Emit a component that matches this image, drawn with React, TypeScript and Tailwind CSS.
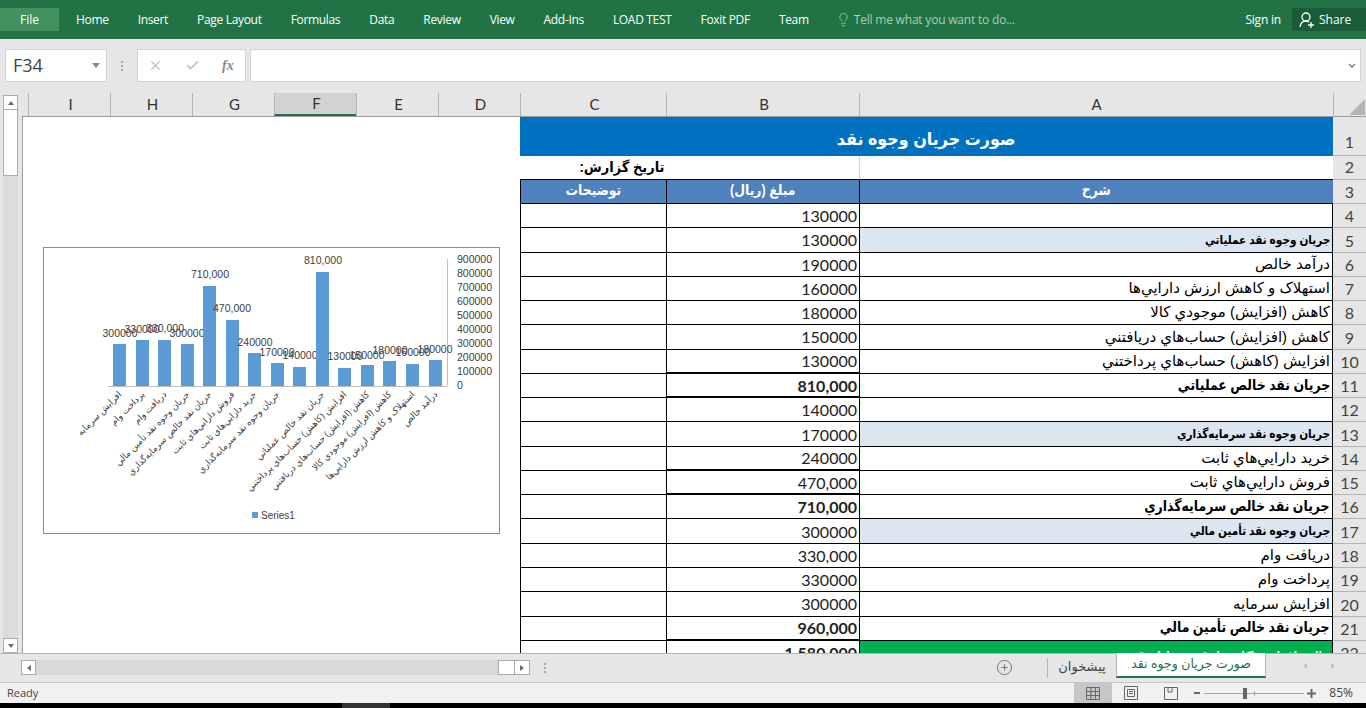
import React from 'react';
import { Check, CirclePlus, Lightbulb, X } from 'lucide-react';

interface SheetRow {
  n: number;
  value: string;
  label: string;
  kind?: 'section' | 'total' | 'result';
  thick?: boolean;
}

const ribbonTabs = ['Home', 'Insert', 'Page Layout', 'Formulas', 'Data', 'Review', 'View', 'Add-Ins', 'LOAD TEST', 'Foxit PDF', 'Team'];
const columnHeads = ['I', 'H', 'G', 'F', 'E', 'D'];

const rows: SheetRow[] = [
  { n: 4, value: '130000', label: '' },
  { n: 5, value: '130000', label: 'جريان وجوه نقد عملياتي', kind: 'section' },
  { n: 6, value: '190000', label: 'درآمد خالص' },
  { n: 7, value: '160000', label: 'استهلاک و کاهش ارزش دارايي‌ها' },
  { n: 8, value: '180000', label: 'کاهش (افزايش) موجودي کالا' },
  { n: 9, value: '150000', label: 'کاهش (افزايش) حساب‌هاي دريافتني' },
  { n: 10, value: '130000', label: 'افزايش (کاهش) حساب‌هاي پرداختني', thick: true },
  { n: 11, value: '810,000', label: 'جريان نقد خالص عملياتي', kind: 'total', thick: true },
  { n: 12, value: '140000', label: '' },
  { n: 13, value: '170000', label: 'جريان وجوه نقد سرمايه‌گذاري', kind: 'section' },
  { n: 14, value: '240000', label: 'خريد دارايي‌هاي ثابت', thick: true },
  { n: 15, value: '470,000', label: 'فروش دارايي‌هاي ثابت', thick: true },
  { n: 16, value: '710,000', label: 'جريان نقد خالص سرمايه‌گذاري', kind: 'total' },
  { n: 17, value: '300000', label: 'جريان وجوه نقد تأمين مالي', kind: 'section' },
  { n: 18, value: '330,000', label: 'دريافت وام' },
  { n: 19, value: '330000', label: 'پرداخت وام' },
  { n: 20, value: '300000', label: 'افزايش سرمايه' },
  { n: 21, value: '960,000', label: 'جريان نقد خالص تأمين مالي', kind: 'total', thick: true },
  { n: 22, value: '1,580,000', label: 'خالص افزايش (کاهش) نقدي معادل نقد', kind: 'result' },
];

const chartBars = [
  { x: 70, top: 97, label: '300000', lx: 77, ly: 86, cat: 'افزايش سرمايه' },
  { x: 93, top: 93, label: '330000', lx: 99, ly: 82, cat: 'پرداخت وام' },
  { x: 115, top: 93, label: '330,000', lx: 122, ly: 81, cat: 'دريافت وام' },
  { x: 138, top: 97, label: '300000', lx: 144, ly: 86, cat: 'جريان وجوه نقد تأمين مالي' },
  { x: 160, top: 39, label: '710,000', lx: 167, ly: 27, cat: 'جريان نقد خالص سرمايه‌گذاري' },
  { x: 183, top: 73, label: '470,000', lx: 189, ly: 61, cat: 'فروش دارايي‌هاي ثابت' },
  { x: 205, top: 106, label: '240000', lx: 212, ly: 95, cat: 'خريد دارايي‌هاي ثابت' },
  { x: 228, top: 116, label: '170000', lx: 234, ly: 105, cat: 'جريان وجوه نقد سرمايه‌گذاري' },
  { x: 250, top: 120, label: '140000', lx: 257, ly: 108, cat: '' },
  { x: 273, top: 25, label: '810,000', lx: 280, ly: 13, cat: 'جريان نقد خالص عملياتي' },
  { x: 295, top: 121, label: '130000', lx: 302, ly: 109, cat: 'افزايش (کاهش) حساب‌هاي پرداختني' },
  { x: 318, top: 118, label: '150000', lx: 324, ly: 108, cat: 'کاهش (افزايش) حساب‌هاي دريافتني' },
  { x: 340, top: 114, label: '180000', lx: 347, ly: 103, cat: 'کاهش (افزايش) موجودي کالا' },
  { x: 363, top: 117, label: '160000', lx: 370, ly: 105, cat: 'استهلاک و کاهش ارزش دارايي‌ها' },
  { x: 386, top: 113, label: '180000', lx: 392, ly: 102, cat: 'درآمد خالص' },
];

const axisTicks = [900000, 800000, 700000, 600000, 500000, 400000, 300000, 200000, 100000, 0];

const CashFlowChart = () => (
  <svg width="457" height="287" viewBox="0 0 457 287" className="block">
    <rect x="0.5" y="0.5" width="456" height="286" fill="#fff" stroke="#8c8c8c" />
    <line x1="65" y1="139.5" x2="404" y2="139.5" stroke="#bfbfbf" />
    <line x1="404.5" y1="12" x2="404.5" y2="139" stroke="#bfbfbf" />
    {axisTicks.map((tick, i) => (
      <text key={tick} x="414" y={15.5 + i * 14.05} fontSize="10.5" fill="#404040" fontFamily="'Liberation Sans', sans-serif">
        {tick}
      </text>
    ))}
    {chartBars.map((bar) => (
      <g key={bar.x}>
        <rect x={bar.x} y={bar.top} width="13" height={139 - bar.top} fill="#5b9bd5" />
        <text x={bar.lx} y={bar.ly + 3.5} fontSize="10.5" fill="#404040" textAnchor="middle" fontFamily="'Liberation Sans', sans-serif">
          {bar.label}
        </text>
        {bar.cat && (
          <text
            x={bar.x + 9}
            y={148}
            fontSize="9"
            fill="#404040"
            textAnchor="end"
            transform={`rotate(-45 ${bar.x + 9} 148)`}
            fontFamily="'Liberation Sans', 'DejaVu Sans', sans-serif"
          >
            {bar.cat}
          </text>
        )}
      </g>
    ))}
    <rect x="209" y="265" width="6" height="6" fill="#5b9bd5" />
    <text x="218" y="272" fontSize="10" fill="#404040" fontFamily="'Liberation Sans', sans-serif">
      Series1
    </text>
  </svg>
);

const RowNumber = ({ n }: { n: number }) => (
  <div
    className={`flex items-end justify-center bg-[#e6e6e6] border-b border-[#b5b5b5] text-[#444] text-[16px] leading-[20px] font-['Lato',sans-serif] ${n === 1 ? 'pb-[3px]' : n === 2 ? 'pb-[2px]' : 'pb-[1px]'}`}
  >
    {n}
  </div>
);

const SheetGrid = () => (
  <div className="w-[846px] h-[536px] overflow-hidden grid grid-cols-[146px_193px_474px_33px] grid-rows-[39px_24px_24px_repeat(18,24.28px)_24px] text-black font-['Liberation_Sans','DejaVu_Sans',sans-serif]">
    <div className="col-span-3 bg-[#0070c0] flex items-center justify-center text-white font-bold text-[17px]" dir="rtl">
      <span className="pt-[7px] scale-x-[0.94]">صورت جریان وجوه نقد</span>
    </div>
    <RowNumber n={1} />

    <div className="border-b border-black flex items-center justify-end pr-[2px] font-bold text-[14px]">
      <span dir="rtl" className="origin-right scale-x-[0.93]">تاریخ گزارش:</span>
    </div>
    <div className="border-b border-black" />
    <div className="border-b border-black border-l border-l-[#d4d4d4]" />
    <RowNumber n={2} />

    {['توضیحات', 'مبلغ (ریال)', 'شرح'].map((head) => (
      <div key={head} className="bg-[#4f81bd] border-b border-l border-black flex items-center justify-center text-white font-bold text-[14px]">
        <span dir="rtl" className="pb-[2px] scale-x-[0.89]">{head}</span>
      </div>
    ))}
    <RowNumber n={3} />

    {rows.map((row) => {
      const bold = row.kind === 'total' || row.kind === 'result';
      let labelClass = 'bg-white text-black text-[15px]';
      let spanClass = '';
      if (row.kind === 'section') {
        labelClass = 'bg-[#dce6f1] text-black font-bold text-[12px]';
        spanClass = 'origin-right scale-x-[0.875]';
      }
      if (row.kind === 'total') {
        labelClass = 'bg-white text-black font-bold text-[14.5px]';
        spanClass = 'origin-right scale-x-[0.86]';
      }
      if (row.kind === 'result') {
        labelClass = 'bg-[#00b050] text-white font-bold text-[12px] pt-[8px]';
        spanClass = 'origin-right scale-x-[0.875]';
      }
      return (
        <React.Fragment key={row.n}>
          <div className="border-b border-l border-black" />
          <div
            className={`${row.thick ? 'border-b-2' : 'border-b'} border-l border-black flex items-center justify-end pr-[2px] pt-[1px] text-[16px] font-['Lato',sans-serif] text-[#222] ${bold ? 'font-bold' : ''}`}
          >
            {row.value}
          </div>
          <div className={`${labelClass} border-b border-l border-r border-black flex items-center justify-end pr-[2px]`}>
            <span dir="rtl" className={spanClass}>{row.label}</span>
          </div>
          <RowNumber n={row.n} />
        </React.Fragment>
      );
    })}
  </div>
);

const ScrollArrow = ({ direction }: { direction: 'up' | 'down' | 'left' | 'right' }) => {
  const points = { up: '1,6 4,2 7,6', down: '1,2 4,6 7,2', left: '6,1 2,4 6,7', right: '2,1 6,4 2,7' };
  return (
    <svg width="8" height="8" viewBox="0 0 8 8">
      <polygon points={points[direction]} fill="#6a6a6a" />
    </svg>
  );
};

const App: React.FC = () => {
  return (
    <div className="w-[1366px] h-[708px] overflow-hidden flex flex-col bg-[#e6e6e6] font-['Open_Sans',sans-serif]">
      {/* ribbon tabs */}
      <div className="h-[39px] shrink-0 bg-[#217346] pt-[8px] flex items-start text-white text-[12px]">
        <div className="w-[59px] h-[23px] bg-[#43915f] flex items-center justify-center">File</div>
        <div className="flex items-center h-[23px] gap-[29px] ml-[17px] tracking-[-0.32px]">
          {ribbonTabs.map((tab) => (
            <span key={tab}>{tab}</span>
          ))}
        </div>
        <div className="flex items-center h-[23px] ml-[27px] text-[#a9cdb8] tracking-[-0.2px]">
          <Lightbulb size={15} strokeWidth={1.2} />
          <span className="ml-[3px]">Tell me what you want to do...</span>
        </div>
        <span className="ml-auto h-[23px] flex items-center tracking-[-0.2px]">Sign in</span>
        <div className="ml-[11px] w-[74px] h-[23px] bg-[#1a5c38] flex items-center pl-[6px]">
          <svg width="18" height="18" viewBox="0 0 18 18" fill="none" stroke="#fff" strokeWidth="1.3">
            <circle cx="8" cy="6" r="4" />
            <path d="M2 16c.5-3.5 2.5-6 6-6 1.3 0 2.3.3 3 .9" />
            <path d="M13 11v6M10 14h6" />
          </svg>
          <span className="ml-[3px]">Share</span>
        </div>
      </div>

      {/* formula bar */}
      <div className="h-[54px] shrink-0 pt-[10px] pl-[5px] pr-[5px] flex items-start">
        <div className="w-[102px] h-[33px] bg-white border border-[#d4d4d4] flex items-center justify-between pl-[7px] pr-[6px] text-[18px] text-[#444]">
          <span>F34</span>
          <svg width="8" height="5" viewBox="0 0 8 5">
            <polygon points="0,0 8,0 4,5" fill="#888" />
          </svg>
        </div>
        <div className="w-[30px] h-[33px] flex flex-col items-center justify-center gap-[2px]">
          <span className="w-[2px] h-[2px] bg-[#a6a6a6]" />
          <span className="w-[2px] h-[2px] bg-[#a6a6a6]" />
          <span className="w-[2px] h-[2px] bg-[#a6a6a6]" />
        </div>
        <div className="w-[109px] h-[33px] bg-white border border-[#d4d4d4] flex items-center pl-[10px] text-[#bdbdbd]">
          <X size={15} strokeWidth={2} />
          <Check size={15} strokeWidth={2.6} className="ml-[22px]" />
          <span className="ml-[22px] text-[14px] italic font-bold font-['Liberation_Serif',serif] text-[#888]">fx</span>
        </div>
        <div className="ml-[4px] flex-1 h-[33px] bg-white border border-[#d4d4d4] flex items-center justify-end pr-[4px]">
          <svg width="8" height="6" viewBox="0 0 8 6" fill="none" stroke="#777" strokeWidth="1.4">
            <path d="M1 1l3 3 3-3" />
          </svg>
        </div>
      </div>

      {/* sheet area */}
      <div className="flex-1 min-h-0 flex">
        <div className="w-[22px] shrink-0 pt-[2px] pl-[3px] flex flex-col h-[560px]">
          <div className="w-[15px] h-[15px] bg-white border border-[#ababab] flex items-center justify-center">
            <ScrollArrow direction="up" />
          </div>
          <div className="w-[15px] h-[66px] bg-white border border-t-0 border-[#ababab]" />
          <div className="w-[15px] flex-1 bg-[#dcdcdc]" />
          <div className="w-[15px] h-[15px] bg-white border border-[#ababab] flex items-center justify-center">
            <ScrollArrow direction="down" />
          </div>
        </div>

        <div className="flex-1 flex flex-col min-w-0">
          <div className="h-[24px] shrink-0 flex border-b border-[#9b9b9b] text-[15px] text-[#333] font-['Lato',sans-serif]">
            <div className="w-[6px]" />
            {columnHeads.map((col) => (
              <div
                key={col}
                className={`w-[82px] pl-[2px] flex items-center justify-center border-l border-[#b5b5b5] ${col === 'F' ? 'bg-[#d2d2d2] border-b-2 border-b-[#217346]' : ''}`}
              >
                {col}
              </div>
            ))}
            <div className="w-[146px] pl-[2px] flex items-center justify-center border-l border-[#b5b5b5]">C</div>
            <div className="w-[193px] pl-[2px] flex items-center justify-center border-l border-[#b5b5b5]">B</div>
            <div className="w-[474px] flex items-center justify-center border-l border-[#b5b5b5]">A</div>
            <div className="w-[33px] flex items-end justify-end pr-[1px] pb-[1px] border-l border-[#b5b5b5]">
              <svg width="16" height="16" viewBox="0 0 16 16">
                <polygon points="16,0 16,16 0,16" fill="#b5b5b5" />
              </svg>
            </div>
          </div>

          <div className="flex h-[536px] bg-white">
            <div className="w-[498px] shrink-0 border-l border-[#9b9b9b] pt-[130px] pl-[20px]">
              <CashFlowChart />
            </div>
            <SheetGrid />
          </div>
        </div>
      </div>

      {/* sheet tabs + horizontal scrollbar */}
      <div className="h-[29px] shrink-0 flex items-start border-t border-[#b5b5b5] bg-[#e6e6e6] relative">
        <div className="ml-[21px] mt-[6px] flex items-stretch h-[15px]">
          <div className="w-[15px] bg-white border border-[#ababab] flex items-center justify-center">
            <ScrollArrow direction="left" />
          </div>
          <div className="w-[462px] bg-[#d9d9d9]" />
          <div className="w-[17px] bg-white border border-[#ababab]" />
          <div className="w-[15px] bg-white border border-l-0 border-[#ababab] flex items-center justify-center">
            <ScrollArrow direction="right" />
          </div>
        </div>
        <div className="ml-[14px] mt-[9px] flex flex-col gap-[2px]">
          <span className="w-[2px] h-[2px] bg-[#a6a6a6]" />
          <span className="w-[2px] h-[2px] bg-[#a6a6a6]" />
          <span className="w-[2px] h-[2px] bg-[#a6a6a6]" />
        </div>
        <div className="ml-[450px] mt-[5px] text-[#666]">
          <CirclePlus size={17} strokeWidth={1.2} />
        </div>
        <div className="ml-[34px] mt-[4px] w-px h-[20px] bg-[#b5b5b5]" />
        <div className="w-[68px] h-[25px] flex items-center justify-center text-[13px] text-[#444] font-['Liberation_Sans','DejaVu_Sans',sans-serif]">
          <span dir="rtl">پیشخوان</span>
        </div>
        <div className="w-[150px] h-[25px] -mt-px bg-white border-x border-[#b5b5b5] border-b-2 border-b-[#217346] flex items-center justify-center text-[12.5px] text-[#217346] font-['Liberation_Sans','DejaVu_Sans',sans-serif]">
          <span dir="rtl">صورت جریان وجوه نقد</span>
        </div>
        <div className="ml-[35px] mt-[8px] opacity-30">
          <ScrollArrow direction="left" />
        </div>
        <div className="ml-[20px] mt-[8px] opacity-30">
          <ScrollArrow direction="right" />
        </div>
      </div>

      {/* status bar */}
      <div className="h-[21px] shrink-0 bg-[#f1f1f1] border-t border-[#c6c6c6] flex items-center text-[11px] text-[#444]">
        <span className="ml-[7px]">Ready</span>
        <div className="ml-auto flex items-center h-full">
          <div className="w-[38px] h-full bg-[#c6c6c6] flex items-center justify-center">
            <svg width="14" height="13" viewBox="0 0 14 13" fill="none" stroke="#666" strokeWidth="1">
              <path d="M.5.5h13v12H.5zM5 .5v12M9.500 .5v12M.5 4.500h13M.5 8.500h13" />
            </svg>
          </div>
          <div className="w-[38px] flex items-center justify-center">
            <svg width="14" height="14" viewBox="0 0 14 14" fill="none" stroke="#666" strokeWidth="1">
              <path d="M.5.5h13v13H.5zM3.500 3.500h7v7h-7zM5 5.500h4M5 7.500h4" />
            </svg>
          </div>
          <div className="w-[42px] flex items-center justify-center">
            <svg width="14" height="13" viewBox="0 0 14 13" fill="none" stroke="#666" strokeWidth="1">
              <path d="M.5.500h13v12H.5zM4 .5v4.500h4V.5" />
            </svg>
          </div>
          <div className="ml-[2px] w-[6px] h-[2px] bg-[#666]" />
          <div className="ml-[4px] w-[100px] h-px bg-[#a6a6a6] relative">
            <div className="absolute left-[39px] -top-[5px] w-[4px] h-[11px] bg-[#666]" />
            <div className="absolute left-[50px] -top-[2px] w-px h-[5px] bg-[#a6a6a6]" />
          </div>
          <svg width="9" height="9" viewBox="0 0 9 9" className="ml-[3px]" stroke="#666" strokeWidth="2">
            <path d="M0 4.500h9M4.500 0v9" />
          </svg>
          <span className="ml-[13px] mr-[13px] text-[12px]">85%</span>
        </div>
      </div>

      <div className="h-[5px] shrink-0 bg-black flex">
        <div className="ml-[342px] w-[48px] bg-[#333]" />
      </div>
    </div>
  );
};

export default App;
